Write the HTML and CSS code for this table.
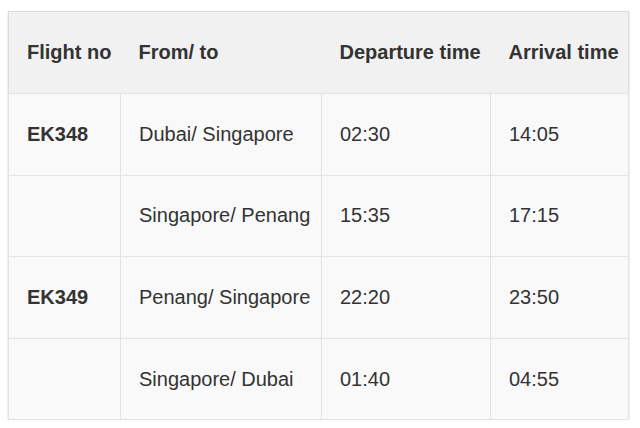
FILE: index.html
```html
<!DOCTYPE html>
<html>
<head>
<meta charset="utf-8">
<link rel="stylesheet" href="styles.css">
</head>
<body>
<table class="flights">
  <colgroup>
    <col class="c1"><col class="c2"><col class="c3"><col class="c4">
  </colgroup>
  <thead>
    <tr><th>Flight no</th><th>From/ to</th><th>Departure time</th><th>Arrival time</th></tr>
  </thead>
  <tbody>
    <tr><td class="fno">EK348</td><td>Dubai/ Singapore</td><td>02:30</td><td>14:05</td></tr>
    <tr><td class="fno"></td><td>Singapore/ Penang</td><td>15:35</td><td>17:15</td></tr>
    <tr><td class="fno">EK349</td><td>Penang/ Singapore</td><td>22:20</td><td>23:50</td></tr>
    <tr><td class="fno"></td><td>Singapore/ Dubai</td><td>01:40</td><td>04:55</td></tr>
  </tbody>
</table>
</body>
</html>
```
FILE: styles.css
```css
html, body { margin: 0; padding: 0; background: #fff; }
body { padding: 11px 0 0 8px; }
.flights {
  border-collapse: collapse;
  table-layout: fixed;
  width: 620px;
  font-family: "Liberation Sans", Arial, sans-serif;
  font-size: 20px;
  color: #333;
  border: 1px solid #dcdcdc;
  box-shadow: 0 1px 2px rgba(0,0,0,0.18);
  background: #f9f9f9;
}
.c1 { width: 112px; }
.c2 { width: 201px; }
.c3 { width: 169px; }
.c4 { width: 138px; }
.flights th {
  background: #f1f1f1;
  text-align: left;
  font-weight: bold;
  padding: 0 0 0 18px;
  height: 81px;
  border-bottom: 1px solid #e3e3e3;
  white-space: nowrap;
}
.flights td {
  padding: 0 0 0 18px;
  height: 80.6px;
  border: 1px solid #e3e3e3;
  white-space: nowrap;
}
.flights td.fno { font-weight: bold; }
```
